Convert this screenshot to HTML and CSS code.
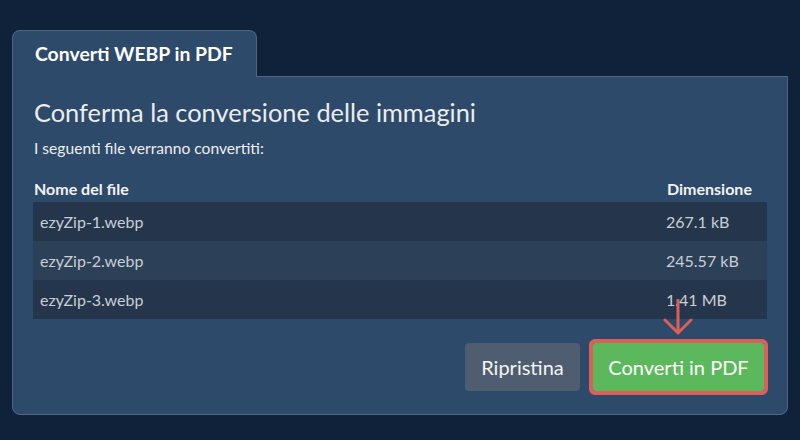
FILE: index.html
```html
<!DOCTYPE html>
<html lang="it">
<head>
<meta charset="utf-8">
<title>Converti WEBP in PDF</title>
<link rel="stylesheet" href="styles.css">
</head>
<body>
<div class="wrap">
  <div class="tab">Converti WEBP in PDF</div>
  <div class="panel">
    <h1 class="title">Conferma la conversione delle immagini</h1>
    <p class="sub">I seguenti file verranno convertiti:</p>
    <div class="table">
      <div class="th th-name">Nome del file</div>
      <div class="th th-size">Dimensione</div>
      <div class="td odd name">ezyZip-1.webp</div>
      <div class="td odd size">267.1 kB</div>
      <div class="td even name">ezyZip-2.webp</div>
      <div class="td even size">245.57 kB</div>
      <div class="td odd name">ezyZip-3.webp</div>
      <div class="td odd size">1.41 MB</div>
    </div>
    <div class="actions">
      <button class="btn btn-reset">Ripristina</button>
      <div class="convert-wrap">
        <svg class="arrow" width="32" height="38" viewBox="0 0 32 38" aria-hidden="true">
          <path d="M16 1 V34 M3 21 L16 34 L29 21" fill="none" stroke="#dc5f58" stroke-width="3" stroke-linecap="round" stroke-linejoin="round"/>
        </svg>
        <button class="btn btn-convert">Converti in PDF</button>
      </div>
    </div>
  </div>
</div>
</body>
</html>
```
FILE: styles.css
```css
* { box-sizing: border-box; }
html, body {
  margin: 0;
  padding: 0;
  background: #10223a;
  font-family: Lato, "Open Sans", sans-serif;
  width: 800px;
  height: 440px;
  overflow: hidden;
}
.wrap {
  padding: 30px 12px 0 12px;
}
.tab {
  position: relative;
  z-index: 2;
  width: 245px;
  height: 47px;
  margin-bottom: -1px;
  background: #2d4a6b;
  border: 1px solid #4e6784;
  border-bottom: none;
  border-radius: 8px 8px 0 0;
  color: #ffffff;
  font-weight: 700;
  font-size: 19.4px;
  line-height: 24px;
  padding: 11px 0 0 22px;
}
.panel {
  position: relative;
  z-index: 1;
  width: 776px;
  height: 339px;
  background: #2d4a6b;
  border: 1px solid #4e6784;
  border-radius: 0 0 8px 8px;
  padding: 19px 20px 0 21px;
}
.title {
  margin: 0;
  font-size: 25.4px;
  line-height: 32px;
  font-weight: 400;
  color: #ececec;
}
.sub {
  margin: 10px 0 0 0;
  font-size: 15.6px;
  line-height: 20px;
  color: #eeeeee;
}
.table {
  margin: 20px 0 0 -1px;
  display: grid;
  grid-template-columns: 627px 107px;
  width: 734px;
}
.th {
  font-weight: 700;
  font-size: 16px;
  line-height: 22px;
  color: #f2f2f2;
  padding-bottom: 2px;
}
.th-name { padding-left: 1px; }
.th-size { padding-left: 7px; }
.td {
  height: 39px;
  line-height: 39px;
  font-size: 16px;
  color: #c9ced5;
}
.td.name { padding-left: 7px; }
.td.size { padding-left: 6px; }
.odd { background: #25364c; }
.even { background: #2c4158; }
.actions {
  display: flex;
  justify-content: flex-end;
  align-items: center;
  margin-top: 24px;
  padding-right: 3px;
  gap: 13px;
}
.btn {
  font-family: Lato, "Open Sans", sans-serif;
  font-size: 20px;
  border: none;
  border-radius: 4px;
  height: 48px;
  color: #f4f4f4;
  padding: 0;
}
.btn-reset {
  width: 115px;
  background: #4e5e70;
}
.convert-wrap {
  position: relative;
}
.btn-convert {
  display: block;
  width: 171px;
  background: #5cb85c;
  color: #ffffff;
  outline: 4px solid #dc5f58;
  border-radius: 2px;
}
.arrow {
  position: absolute;
  left: 69px;
  top: -44px;
}
```
